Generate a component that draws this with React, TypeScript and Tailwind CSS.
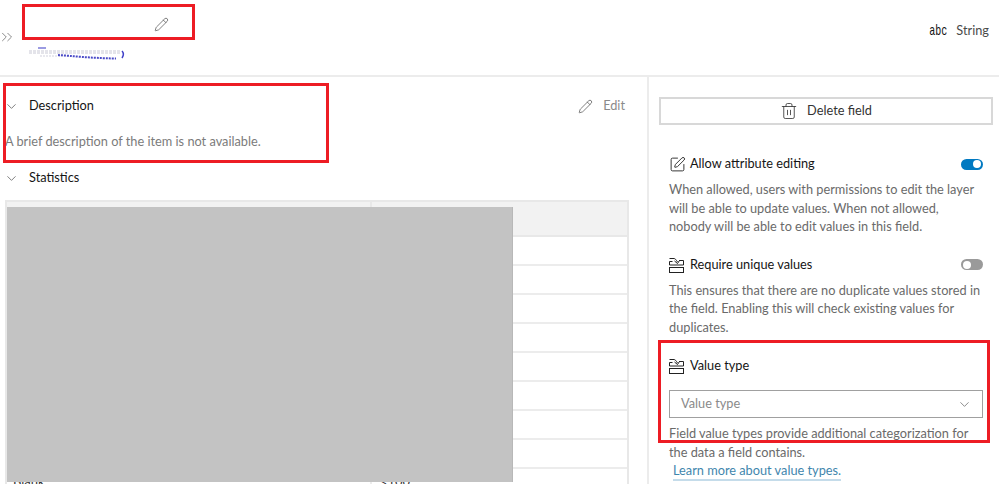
import { ChevronDown, ChevronsRight, Pencil, SquarePen, Trash2 } from "lucide-react";

function FieldIcon() {
  return (
    <svg width="15" height="16" viewBox="0 0 15 16" fill="none" stroke="#222" strokeWidth="1" className="shrink-0">
      <path d="M0.500 1.500h4.500c1 0 2 1 3.500 3.500" />
      <path d="M5.500 4l3 2.500 2-3" />
      <path d="M10 3.500h4.500v4.500h-14v-3.500h3" />
      <rect x="0.500" y="10.500" width="14" height="5" />
    </svg>
  );
}

function Toggle({ on }: { on: boolean }) {
  return on ? (
    <div className="w-[22px] h-[11px] rounded-full bg-[#0079c1] flex items-center justify-end pr-[2px]">
      <div className="w-[8px] h-[8px] rounded-full bg-white" />
    </div>
  ) : (
    <div className="w-[22px] h-[11px] rounded-full bg-[#9a9a9a] flex items-center pl-[2px]">
      <div className="w-[8px] h-[8px] rounded-full bg-white" />
    </div>
  );
}

const rows = [0, 1, 2, 3, 4, 5, 6, 7];

export default function App() {
  return (
    <div className="relative w-[999px] h-[484px] overflow-hidden bg-white text-[#151515] text-[12.750px] font-['Lato',sans-serif]">
      {/* Header */}
      <header className="h-[77px] border-b-2 border-[#ececec] flex">
        <div className="flex-1 relative">
          <ChevronsRight size={18} strokeWidth={1} className="absolute left-[-2px] top-[28px] text-[#666]" />
          <Pencil size={15} strokeWidth={1.2} className="absolute left-[154px] top-[17px] text-[#555]" />
          <svg width="98" height="16" viewBox="0 0 98 16" fill="none" className="absolute left-[28px] top-[46px]">
            <path d="M1 6h92" stroke="#e4e4ea" strokeWidth="4" strokeDasharray="3 1" />
            <path d="M12 10h30" stroke="#e8e8ee" strokeWidth="2" strokeDasharray="2 1" />
            <path d="M10 2h8" stroke="#7a7ad8" strokeWidth="1.500" />
            <path d="M30 9c15 1 30 3 58 3.500" stroke="#4a4ac8" strokeWidth="2" strokeDasharray="2 1" />
            <path d="M94 5c2 2 2 4 0 7" stroke="#4040c8" strokeWidth="1.500" />
          </svg>
        </div>
        <div className="flex items-center gap-[9px] pr-[10px] pb-[13px] text-[#4a4a4a]">
          <span className="font-['Liberation_Mono',monospace] text-[10px] text-[#111] scale-y-150">abc</span>
          <span>String</span>
        </div>
      </header>

      <div className="flex h-[407px]">
        {/* Left column */}
        <main className="w-[649px] border-r-2 border-[#ececec] shrink-0">
          <div className="flex items-center justify-between h-[30px] mt-[14px] pl-[4px] pr-[22px]">
            <div className="flex items-center gap-[10px]">
              <ChevronDown size={15} strokeWidth={1.200} className="text-[#555]" />
              <span>Description</span>
            </div>
            <div className="flex items-center gap-[10px] text-[#8a8a8a]">
              <Pencil size={15} strokeWidth={1.200} className="text-[#555]" />
              <span>Edit</span>
            </div>
          </div>
          <p className="mt-[10px] pl-[5px] leading-[20px] text-[#7b7b7b]">A brief description of the item is not available.</p>
          <div className="flex items-center gap-[10px] mt-[17px] h-[20px] pl-[4px]">
            <ChevronDown size={15} strokeWidth={1.200} className="text-[#555]" />
            <span>Statistics</span>
          </div>

          <div className="mt-[12px] ml-[5px] mr-[18px] border-x-2 border-t-2 border-[#e8e8e8]">
            <div className="flex h-[35px] bg-[#f2f2f2] border-b-2 border-[#e8e8e8]">
              <div className="w-[365px] border-r-2 border-[#e8e8e8]" />
            </div>
            {rows.map((r) => (
              <div key={r} className="flex h-[29px] border-b-2 border-[#ececec]">
                <div className="w-[365px] border-r-2 border-[#ececec]" />
              </div>
            ))}
            <div className="flex h-[29px] text-[13px] text-[#333]">
              <div className="w-[365px] border-r-2 border-[#ececec] pl-[6px] pt-[3px]">Blank</div>
              <div className="pl-[8px] pt-[3px]">&lt;100</div>
            </div>
          </div>
        </main>

        {/* Right column */}
        <aside className="flex-1 pl-[10px] pr-[6px] pt-[20px]">
          <button className="w-full h-[28px] border-2 border-[#d8d8d8] flex items-center justify-center gap-[9px] text-[#333]">
            <Trash2 size={18} strokeWidth={1.100} />
            <span>Delete field</span>
          </button>

          <div className="px-[10px] mt-[29px]">
            <div className="flex items-center justify-between h-[20px]">
              <div className="flex items-center gap-[4px]">
                <SquarePen size={17} strokeWidth={1.200} />
                <span>Allow attribute editing</span>
              </div>
              <Toggle on />
            </div>
            <p className="mt-[6px] leading-[18.500px] text-[#6a6a6a]">
              When allowed, users with permissions to edit the layer will be able to update values. When not allowed, nobody will be able to edit values in this field.
            </p>

            <div className="flex items-center justify-between h-[20px] mt-[19px]">
              <div className="flex items-center gap-[6px]">
                <FieldIcon />
                <span>Require unique values</span>
              </div>
              <Toggle on={false} />
            </div>
            <p className="mt-[6px] leading-[18.500px] text-[#6a6a6a]">
              This ensures that there are no duplicate values stored in the field. Enabling this will check existing values for duplicates.
            </p>

            <div className="flex items-center gap-[6px] h-[20px] mt-[20px]">
              <FieldIcon />
              <span>Value type</span>
            </div>
            <div className="mt-[14px] h-[28px] border border-[#a0a0a0] flex items-center justify-between pl-[11px] pr-[10px] text-[#8a8a8a]">
              <span>Value type</span>
              <ChevronDown size={15} strokeWidth={1.200} className="text-[#666]" />
            </div>
            <p className="mt-[6px] leading-[18.500px] text-[#6a6a6a]">
              Field value types provide additional categorization for the data a field contains.
            </p>
            <a className="inline-block ml-[4px] text-[#3f86ad] border-b-2 border-[#c5dcea] leading-[17px]">Learn more about value types.</a>
          </div>
        </aside>
      </div>

      {/* Redaction block and red annotation boxes pasted over the screenshot */}
      <div className="absolute left-[7px] top-[207px] w-[506px] h-[275px] bg-[#c3c3c3] border-r border-[#b8b8b8]" />
      <div className="absolute left-[22px] top-[4px] w-[173px] h-[36px] border-[3px] border-[#ed1c24]" />
      <div className="absolute left-[3px] top-[83px] w-[326px] h-[80px] border-[3px] border-[#ed1c24]" />
      <div className="absolute left-[658px] top-[340px] w-[332px] h-[103px] border-[3px] border-[#ed1c24]" />
    </div>
  );
}
